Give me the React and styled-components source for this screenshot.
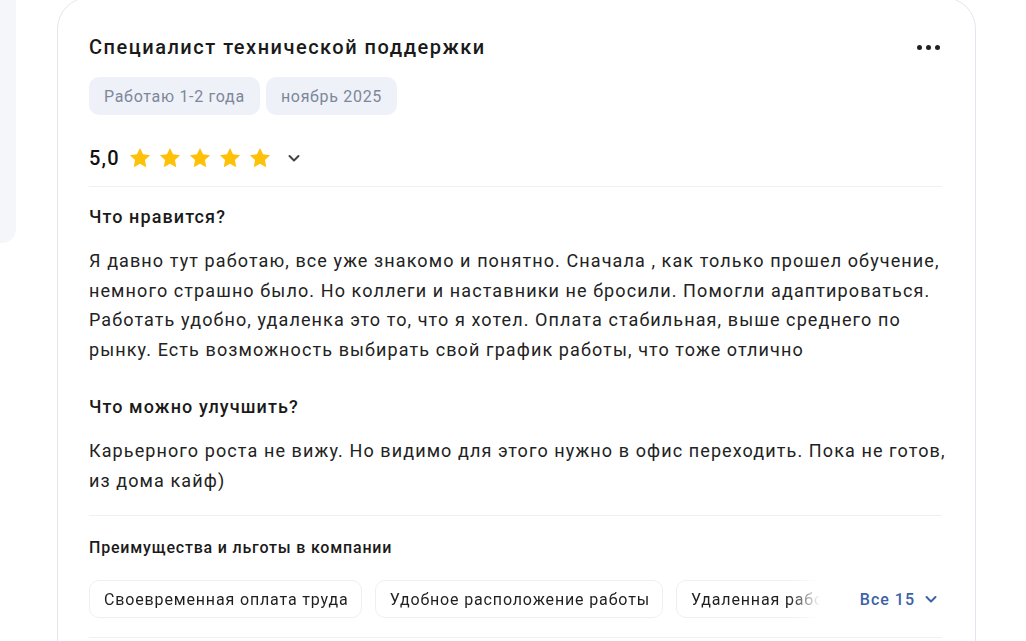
import React from "react";
import styled, { createGlobalStyle } from "styled-components";

const GlobalStyle = createGlobalStyle`
  body {
    margin: 0;
    background: #fff;
    font-family: Roboto, "Noto Sans", Arial, sans-serif;
    color: #1f1f1f;
    overflow: hidden;
  }
`;

const Page = styled.div`
  display: flex;
  align-items: flex-start;
  gap: 41px;
  height: 641px;
  overflow: hidden;
`;

const SidePanel = styled.div`
  width: 16px;
  height: 243px;
  background: #f5f6fa;
  border-bottom-right-radius: 14px;
  flex-shrink: 0;
`;

const Card = styled.div`
  width: 919px;
  box-sizing: border-box;
  margin-top: -3px;
  padding: 35px 33px 40px 31px;
  border: 1px solid #e2e6ee;
  border-radius: 32px;
  background: #fff;
  flex-shrink: 0;
`;

const Header = styled.div`
  display: flex;
  justify-content: space-between;
  align-items: center;
`;

const Title = styled.h2`
  margin: 0;
  font-size: 20px;
  font-weight: 500;
  line-height: 28px;
  letter-spacing: 1.5px;
  color: #1a1a1a;
`;

const MoreButton = styled.button`
  border: none;
  background: none;
  padding: 0;
  margin-right: 2px;
  display: flex;
  gap: 4px;
  cursor: pointer;
  span {
    width: 5px;
    height: 5px;
    border-radius: 50%;
    background: #222;
  }
`;

const Tags = styled.div`
  display: flex;
  gap: 6px;
  margin-top: 16px;
`;

const Tag = styled.span`
  display: inline-flex;
  align-items: center;
  height: 38px;
  padding: 0 15px;
  border-radius: 10px;
  background: #eef1f8;
  color: #7d8799;
  font-size: 16px;
  letter-spacing: 0.7px;
`;

const RatingRow = styled.div`
  display: flex;
  align-items: center;
  margin-top: 26px;
  height: 34px;
`;

const Score = styled.span`
  font-size: 20px;
  font-weight: 500;
  letter-spacing: 1.2px;
  color: #111;
  margin-right: 9px;
`;

const Stars = styled.div`
  display: flex;
  gap: 8px;
  margin-right: 16px;
`;

const Divider = styled.div`
  height: 1px;
  background: #eef0f4;
  margin: ${(p) => p.$m || "0"};
`;

const SectionTitle = styled.h3`
  margin: ${(p) => p.$top || 0}px 0 0;
  font-size: ${(p) => (p.$small ? "16px" : "18px")};
  font-weight: 500;
  line-height: 24px;
  letter-spacing: ${(p) => (p.$small ? "0.8px" : "1.1px")};
  color: #1a1a1a;
`;

const Body = styled.p`
  margin: 17px -8px 0 0;
  font-size: 18px;
  line-height: 29.5px;
  letter-spacing: 1.1px;
  color: #222;
`;

const PerksRow = styled.div`
  display: flex;
  align-items: center;
  margin-top: 20px;
  gap: 34px;
`;

const ChipScroller = styled.div`
  flex: 1;
  display: flex;
  gap: 13px;
  overflow: hidden;
  -webkit-mask-image: linear-gradient(to right, #000 calc(100% - 36px), transparent calc(100% - 6px));
  mask-image: linear-gradient(to right, #000 calc(100% - 36px), transparent calc(100% - 6px));
`;

const Chip = styled.span`
  flex-shrink: 0;
  display: inline-flex;
  align-items: center;
  height: 38px;
  box-sizing: border-box;
  padding: 0 12px 0 14px;
  border: 1px solid #eceff5;
  border-radius: 10px;
  font-size: 16px;
  letter-spacing: 0.85px;
  color: #1f1f1f;
  white-space: nowrap;
`;

const AllButton = styled.button`
  display: flex;
  align-items: center;
  gap: 9px;
  border: none;
  background: none;
  padding: 0 4px 0 0;
  font-family: inherit;
  font-size: 16px;
  font-weight: 500;
  letter-spacing: 1px;
  color: #3b62a6;
  cursor: pointer;
`;

const Star = () => (
  <svg width="22" height="22" viewBox="0 0 24 24">
    <path
      fill="#ffc107"
      d="M12 1l3.3 7 7.7 1-5.6 5.3 1.4 7.7L12 18.2l-6.8 3.8 1.4-7.7L1 9l7.7-1z"
    />
  </svg>
);

const Chevron = ({ color = "#444", size = 14 }) => (
  <svg width={size} height={size} viewBox="0 0 14 14">
    <path
      d="M2.5 5l4.5 4.5L11.5 5"
      fill="none"
      stroke={color}
      strokeWidth="2"
      strokeLinecap="round"
      strokeLinejoin="round"
    />
  </svg>
);

const perks = [
  "Своевременная оплата труда",
  "Удобное расположение работы",
  "Удаленная работа",
];

export default function App() {
  return (
    <>
      <GlobalStyle />
      <Page>
        <SidePanel />
        <Card>
          <Header>
            <Title>Специалист технической поддержки</Title>
            <MoreButton aria-label="Ещё">
              <span />
              <span />
              <span />
            </MoreButton>
          </Header>
          <Tags>
            <Tag>Работаю 1-2 года</Tag>
            <Tag>ноябрь 2025</Tag>
          </Tags>
          <RatingRow>
            <Score>5,0</Score>
            <Stars>
              {[0, 1, 2, 3, 4].map((i) => (
                <Star key={i} />
              ))}
            </Stars>
            <Chevron />
          </RatingRow>
          <Divider $m="11px 0 18px" />
          <SectionTitle>Что нравится?</SectionTitle>
          <Body>
            Я давно тут работаю, все уже знакомо и понятно. Сначала , как только
            прошел обучение, немного страшно было. Но коллеги и наставники не
            бросили. Помогли адаптироваться. Работать удобно, удаленка это то,
            что я хотел. Оплата стабильная, выше среднего по рынку. Есть
            возможность выбирать свой график работы, что тоже отлично
          </Body>
          <SectionTitle $top={31}>Что можно улучшить?</SectionTitle>
          <Body>
            Карьерного роста не вижу. Но видимо для этого нужно в офис
            переходить. Пока не готов, из дома кайф)
          </Body>
          <Divider $m="20px 0 20px" />
          <SectionTitle $small>Преимущества и льготы в компании</SectionTitle>
          <PerksRow>
            <ChipScroller>
              {perks.map((p) => (
                <Chip key={p}>{p}</Chip>
              ))}
            </ChipScroller>
            <AllButton>
              Все 15 <Chevron color="#3b62a6" />
            </AllButton>
          </PerksRow>
          <Divider $m="19px 0 0" />
        </Card>
      </Page>
    </>
  );
}
